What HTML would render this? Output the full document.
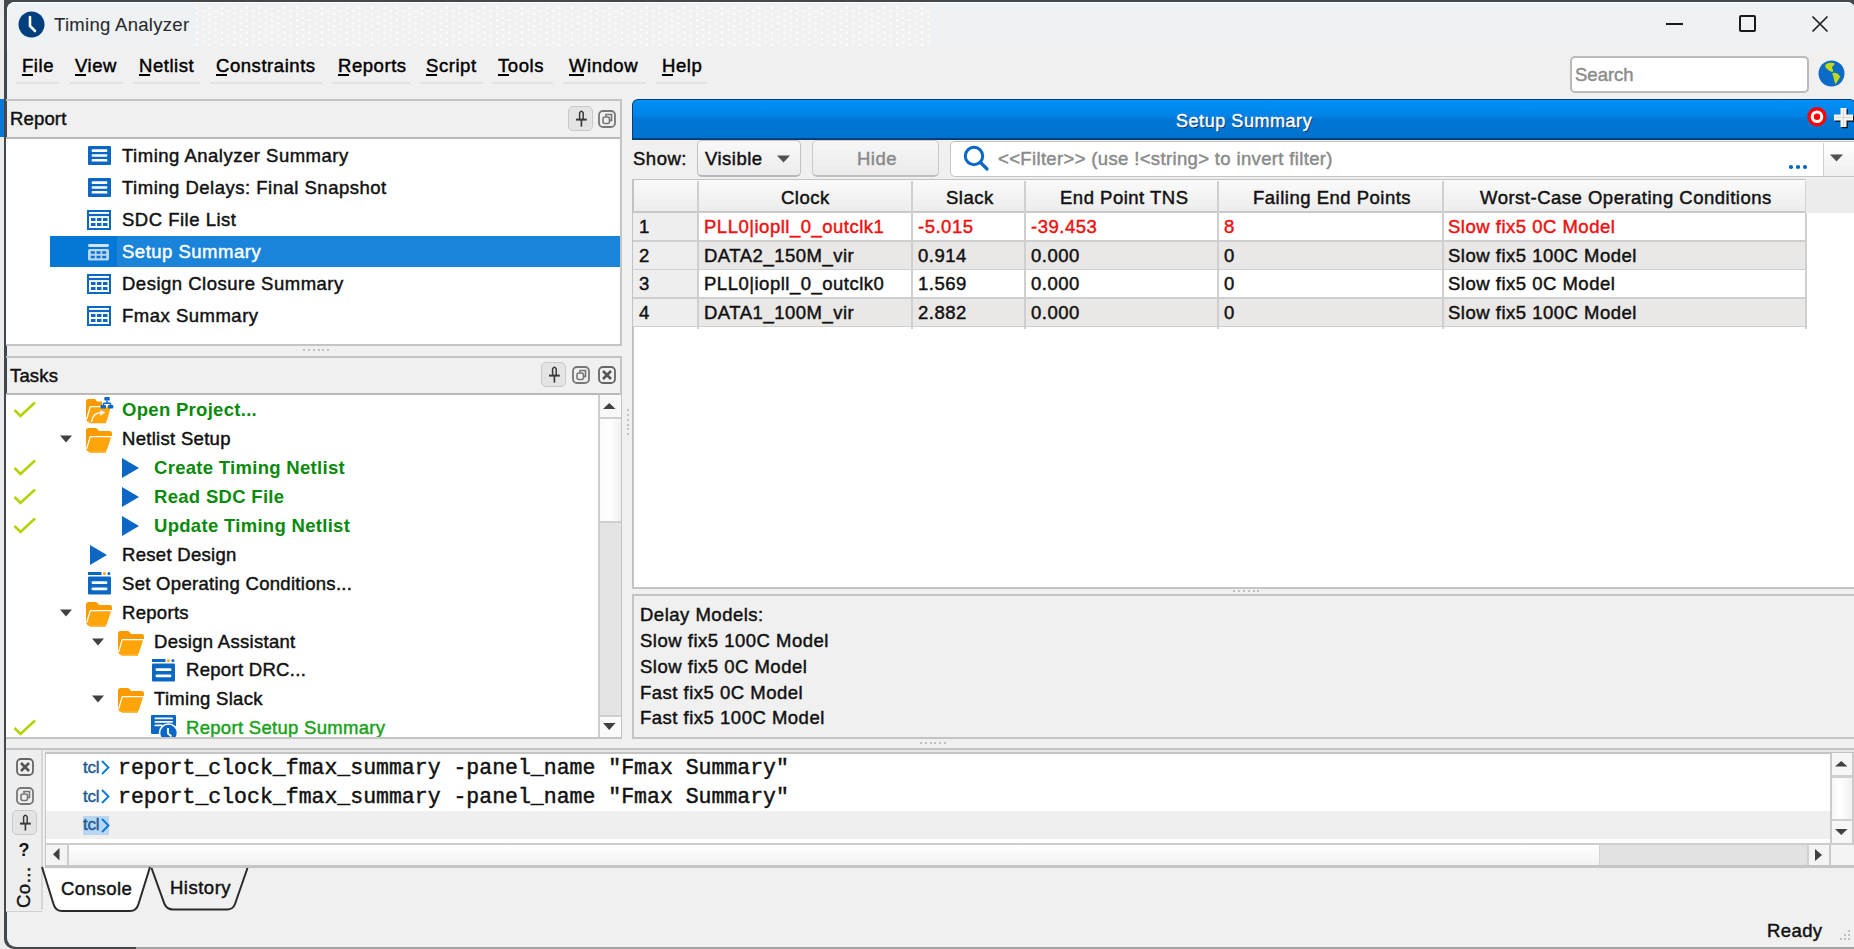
<!DOCTYPE html><html><head><meta charset="utf-8"><style>
html,body{margin:0;padding:0;width:1854px;height:949px;overflow:hidden;background:#f0f0f0;font-family:'Liberation Sans',sans-serif;}
.t{position:absolute;white-space:pre;line-height:1;-webkit-text-stroke:0.45px currentColor;font-family:'Liberation Sans',sans-serif;}
div{box-sizing:border-box}
svg{position:absolute;overflow:visible}
</style></head><body>
<div style="position:absolute;left:0px;top:0px;width:1854px;height:949px;background:#ececec"></div>
<div style="position:absolute;left:0px;top:99px;width:4px;height:38px;background:#0a78d8"></div>
<div style="position:absolute;left:3.5px;top:0px;width:1850.5px;height:949px;background:#43484d;border-radius:0 0 0 10px"></div>
<div style="position:absolute;left:6.5px;top:2px;width:1848px;height:945px;background:#f0f0f0;border-radius:8px 8px 0 9px"></div>
<div style="position:absolute;left:6.5px;top:2px;width:1848px;height:48px;background:#eef2f5;border-radius:8px 8px 0 0;border-top:1.5px solid #fafcfd;border-left:1.5px solid #fafcfd"></div>
<div style="position:absolute;left:196px;top:7px;width:736px;height:39px;background-color:#f1f1f1;background-image:radial-gradient(circle at 1px 1px,#ffffff 0.9px,transparent 1.1px),radial-gradient(circle at 7.25px 4.1px,#ffffff 0.9px,transparent 1.1px);background-size:12.5px 6.2px"></div>
<svg style="left:18px;top:11px" width="27" height="27" viewBox="0 0 27 27"><circle cx="13.5" cy="13.5" r="13" fill="#003f7d"/><path d="M12 6 L12 15 L17 20" stroke="#fff" stroke-width="2.6" fill="none" stroke-linecap="round"/></svg>
<div class="t" style="left:54px;top:16.34px;font-size:18.5px;color:#2a2a2a;letter-spacing:0.3px;font-weight:normal;-webkit-text-stroke:0.1px #2a2a2a;">Timing Analyzer</div>
<div style="position:absolute;left:1666px;top:23px;width:17px;height:2px;background:#1a1a1a"></div>
<div style="position:absolute;left:1739px;top:15px;width:17px;height:17px;border:2px solid #1a1a1a;border-radius:2px"></div>
<svg style="left:1812px;top:16px" width="16" height="16" viewBox="0 0 16 16"><path d="M0.5 0.5 L15.5 15.5 M15.5 0.5 L0.5 15.5" stroke="#1a1a1a" stroke-width="1.6"/></svg>
<div class="t" style="left:22px;top:56.84px;font-size:18.5px;color:#000;letter-spacing:0.55px;font-weight:normal;">File</div>
<div style="position:absolute;left:16px;top:82px;width:43px;height:2px;background:#e2e2e2"></div>
<div class="t" style="left:75px;top:56.84px;font-size:18.5px;color:#000;letter-spacing:0.55px;font-weight:normal;">View</div>
<div style="position:absolute;left:70px;top:82px;width:53px;height:2px;background:#e2e2e2"></div>
<div class="t" style="left:139px;top:56.84px;font-size:18.5px;color:#000;letter-spacing:0.55px;font-weight:normal;">Netlist</div>
<div style="position:absolute;left:133px;top:82px;width:67px;height:2px;background:#e2e2e2"></div>
<div class="t" style="left:216px;top:56.84px;font-size:18.5px;color:#000;letter-spacing:0.55px;font-weight:normal;">Constraints</div>
<div style="position:absolute;left:210px;top:82px;width:112px;height:2px;background:#e2e2e2"></div>
<div class="t" style="left:338px;top:56.84px;font-size:18.5px;color:#000;letter-spacing:0.55px;font-weight:normal;">Reports</div>
<div style="position:absolute;left:332px;top:82px;width:78px;height:2px;background:#e2e2e2"></div>
<div class="t" style="left:426px;top:56.84px;font-size:18.5px;color:#000;letter-spacing:0.55px;font-weight:normal;">Script</div>
<div style="position:absolute;left:420px;top:82px;width:63px;height:2px;background:#e2e2e2"></div>
<div class="t" style="left:498px;top:56.84px;font-size:18.5px;color:#000;letter-spacing:0.55px;font-weight:normal;">Tools</div>
<div style="position:absolute;left:492px;top:82px;width:61px;height:2px;background:#e2e2e2"></div>
<div class="t" style="left:569px;top:56.84px;font-size:18.5px;color:#000;letter-spacing:0.55px;font-weight:normal;">Window</div>
<div style="position:absolute;left:563px;top:82px;width:83px;height:2px;background:#e2e2e2"></div>
<div class="t" style="left:662px;top:56.84px;font-size:18.5px;color:#000;letter-spacing:0.55px;font-weight:normal;">Help</div>
<div style="position:absolute;left:656px;top:82px;width:51px;height:2px;background:#e2e2e2"></div>
<div style="position:absolute;left:22px;top:74px;width:11px;height:2px;background:#000"></div>
<div style="position:absolute;left:75px;top:74px;width:11px;height:2px;background:#000"></div>
<div style="position:absolute;left:139px;top:74px;width:11px;height:2px;background:#000"></div>
<div style="position:absolute;left:216px;top:74px;width:11px;height:2px;background:#000"></div>
<div style="position:absolute;left:338px;top:74px;width:11px;height:2px;background:#000"></div>
<div style="position:absolute;left:426px;top:74px;width:11px;height:2px;background:#000"></div>
<div style="position:absolute;left:498px;top:74px;width:11px;height:2px;background:#000"></div>
<div style="position:absolute;left:569px;top:74px;width:15px;height:2px;background:#000"></div>
<div style="position:absolute;left:662px;top:74px;width:11px;height:2px;background:#000"></div>
<div style="position:absolute;left:1570px;top:56px;width:239px;height:37px;background:#fff;border:2px solid #bababa;border-radius:5px"></div>
<div class="t" style="left:1575px;top:66.34px;font-size:18.5px;color:#8c8c8c;letter-spacing:0px;font-weight:normal;">Search</div>
<svg style="left:1818px;top:60px" width="27" height="27" viewBox="0 0 27 27"><circle cx="13.5" cy="13.5" r="13" fill="#0a6cc6"/><path d="M7.5 4.5 C10 2.5 14.5 2.3 17 3.8 C16 5.5 14 6 14 8 C14.5 9.5 16 10.5 14.5 12 C12 11.5 10 10 8.5 8.5 C7.5 7.5 6.8 6 7.5 4.5 Z" fill="#c2d81a"/><path d="M14.5 13 C17.5 12.3 21 13.8 22 16.5 C21.5 19 19.5 20.5 17.5 24.5 C16.5 22 15.8 19.5 15.5 17 C15 15.5 14 14.5 14.5 13 Z" fill="#c2d81a"/></svg>
<div style="position:absolute;left:6px;top:99px;width:616px;height:2px;background:#c4c4c4"></div>
<div class="t" style="left:10px;top:109.84px;font-size:18.5px;color:#111;letter-spacing:0.15px;font-weight:normal;">Report</div>
<div style="position:absolute;left:568px;top:106px;width:25px;height:25px;background:#e4e4e4;border:1.5px solid #c9c9c9;border-radius:5px"></div>
<svg style="left:568px;top:106px" width="25" height="25" viewBox="0 0 25 25"><path d="M11.6 13 L11.6 6.8 Q13.4 3.6 15.2 6.8 L15.2 13" stroke="#3a3a3a" stroke-width="1.5" fill="none"/><path d="M8 13.6 H18.8" stroke="#3a3a3a" stroke-width="2"/><path d="M13.4 13.6 V20.6" stroke="#3a3a3a" stroke-width="1.7"/></svg>
<svg style="left:598px;top:110px" width="18" height="18" viewBox="0 0 18 18"><rect x="1" y="1" width="16" height="16" rx="4" fill="none" stroke="#777" stroke-width="1.8"/><rect x="5" y="7" width="6.5" height="6.5" rx="2" fill="none" stroke="#777" stroke-width="1.6"/><path d="M8 6.5 L8 4.5 L13.5 4.5 L13.5 10.5 L12 10.5" fill="none" stroke="#777" stroke-width="1.6"/></svg>
<div style="position:absolute;left:620px;top:99px;width:2px;height:247px;background:#c4c4c4"></div>
<div style="position:absolute;left:6px;top:138px;width:614px;height:207px;background:#fff"></div>
<div style="position:absolute;left:6px;top:137px;width:614px;height:2px;background:#b9b9b9"></div>
<div style="position:absolute;left:6px;top:344px;width:616px;height:2px;background:#c4c4c4"></div>
<div style="position:absolute;left:50px;top:236px;width:570px;height:31px;background:#1a83da"></div>
<div style="position:absolute;left:50px;top:236px;width:67px;height:31px;background:#0578d6"></div>
<svg style="left:88px;top:146px" width="23" height="19" viewBox="0 0 23 19"><rect x="0" y="0" width="23" height="19" rx="1" fill="#0a68c4"/><rect x="3.6" y="3.3" width="15.8" height="2.6" rx="1.2" fill="#fff"/><rect x="3.6" y="8.2" width="15.8" height="2.6" rx="1.2" fill="#fff"/><rect x="3.6" y="13" width="15.8" height="2.6" rx="1.2" fill="#fff"/></svg>
<svg style="left:88px;top:178px" width="23" height="19" viewBox="0 0 23 19"><rect x="0" y="0" width="23" height="19" rx="1" fill="#0a68c4"/><rect x="3.6" y="3.3" width="15.8" height="2.6" rx="1.2" fill="#fff"/><rect x="3.6" y="8.2" width="15.8" height="2.6" rx="1.2" fill="#fff"/><rect x="3.6" y="13" width="15.8" height="2.6" rx="1.2" fill="#fff"/></svg>
<svg style="left:87px;top:210px" width="24" height="20" viewBox="0 0 24 20"><rect x="1" y="1" width="22" height="18" fill="#fff" stroke="#0a68c4" stroke-width="2"/><path d="M1 5 H23" stroke="#0a68c4" stroke-width="2.2"/><path d="M4 9.5 h4.5 M10 9.5 h4.5 M16 9.5 h4.5 M4 14.5 h4.5 M10 14.5 h4.5 M16 14.5 h4.5" stroke="#0a68c4" stroke-width="3"/></svg>
<svg style="left:87px;top:243px" width="24" height="18" viewBox="0 0 24 18"><rect x="1" y="1" width="21" height="3" rx="1.4" fill="#cfe3f6"/><rect x="1" y="6" width="21" height="11.5" rx="1.6" fill="#b9d6f2"/><path d="M3.8 9.5 h4 M9.5 9.5 h4 M15.2 9.5 h4 M3.8 14 h4 M9.5 14 h4 M15.2 14 h4" stroke="#0a6fd0" stroke-width="2.6"/></svg>
<svg style="left:87px;top:274px" width="24" height="20" viewBox="0 0 24 20"><rect x="1" y="1" width="22" height="18" fill="#fff" stroke="#0a68c4" stroke-width="2"/><path d="M1 5 H23" stroke="#0a68c4" stroke-width="2.2"/><path d="M4 9.5 h4.5 M10 9.5 h4.5 M16 9.5 h4.5 M4 14.5 h4.5 M10 14.5 h4.5 M16 14.5 h4.5" stroke="#0a68c4" stroke-width="3"/></svg>
<svg style="left:87px;top:306px" width="24" height="20" viewBox="0 0 24 20"><rect x="1" y="1" width="22" height="18" fill="#fff" stroke="#0a68c4" stroke-width="2"/><path d="M1 5 H23" stroke="#0a68c4" stroke-width="2.2"/><path d="M4 9.5 h4.5 M10 9.5 h4.5 M16 9.5 h4.5 M4 14.5 h4.5 M10 14.5 h4.5 M16 14.5 h4.5" stroke="#0a68c4" stroke-width="3"/></svg>
<div class="t" style="left:122px;top:147.34px;font-size:18.5px;color:#111;letter-spacing:0.5px;font-weight:normal;">Timing Analyzer Summary</div>
<div class="t" style="left:122px;top:179.34px;font-size:18.5px;color:#111;letter-spacing:0.5px;font-weight:normal;">Timing Delays: Final Snapshot</div>
<div class="t" style="left:122px;top:211.34px;font-size:18.5px;color:#111;letter-spacing:0.5px;font-weight:normal;">SDC File List</div>
<div class="t" style="left:122px;top:243.34px;font-size:18.5px;color:#fff;letter-spacing:0.5px;font-weight:normal;">Setup Summary</div>
<div class="t" style="left:122px;top:275.34px;font-size:18.5px;color:#111;letter-spacing:0.5px;font-weight:normal;">Design Closure Summary</div>
<div class="t" style="left:122px;top:307.34px;font-size:18.5px;color:#111;letter-spacing:0.5px;font-weight:normal;">Fmax Summary</div>
<div style="position:absolute;left:303px;top:349px;width:2px;height:2px;background:#c0c0c0"></div>
<div style="position:absolute;left:308px;top:349px;width:2px;height:2px;background:#c0c0c0"></div>
<div style="position:absolute;left:313px;top:349px;width:2px;height:2px;background:#c0c0c0"></div>
<div style="position:absolute;left:318px;top:349px;width:2px;height:2px;background:#c0c0c0"></div>
<div style="position:absolute;left:322px;top:349px;width:2px;height:2px;background:#c0c0c0"></div>
<div style="position:absolute;left:327px;top:349px;width:2px;height:2px;background:#c0c0c0"></div>
<div style="position:absolute;left:6px;top:356px;width:616px;height:2px;background:#c4c4c4"></div>
<div class="t" style="left:10px;top:366.84px;font-size:18.5px;color:#111;letter-spacing:0.15px;font-weight:normal;">Tasks</div>
<div style="position:absolute;left:541px;top:362px;width:25px;height:25px;background:#e4e4e4;border:1.5px solid #c9c9c9;border-radius:5px"></div>
<svg style="left:541px;top:362px" width="25" height="25" viewBox="0 0 25 25"><path d="M11.6 13 L11.6 6.8 Q13.4 3.6 15.2 6.8 L15.2 13" stroke="#3a3a3a" stroke-width="1.5" fill="none"/><path d="M8 13.6 H18.8" stroke="#3a3a3a" stroke-width="2"/><path d="M13.4 13.6 V20.6" stroke="#3a3a3a" stroke-width="1.7"/></svg>
<svg style="left:572px;top:366px" width="18" height="18" viewBox="0 0 18 18"><rect x="1" y="1" width="16" height="16" rx="4" fill="none" stroke="#777" stroke-width="1.8"/><rect x="5" y="7" width="6.5" height="6.5" rx="2" fill="none" stroke="#777" stroke-width="1.6"/><path d="M8 6.5 L8 4.5 L13.5 4.5 L13.5 10.5 L12 10.5" fill="none" stroke="#777" stroke-width="1.6"/></svg>
<svg style="left:598px;top:366px" width="18" height="18" viewBox="0 0 18 18"><rect x="1" y="1" width="16" height="16" rx="4" fill="none" stroke="#666" stroke-width="1.8"/><path d="M5 5 L13 13 M13 5 L5 13" stroke="#555" stroke-width="2.6"/></svg>
<div style="position:absolute;left:6px;top:393px;width:616px;height:2px;background:#b9b9b9"></div>
<div style="position:absolute;left:620px;top:356px;width:2px;height:383px;background:#c4c4c4"></div>
<div style="position:absolute;left:6px;top:395px;width:614px;height:343px;background:#fff"></div>
<div style="position:absolute;left:6px;top:737px;width:616px;height:2px;background:#c4c4c4"></div>
<div style="position:absolute;left:598px;top:395px;width:23px;height:343px;background:#e4e4e4;border-left:2px solid #cdcdcd"></div>
<div style="position:absolute;left:600px;top:395px;width:21px;height:24px;background:#f8f8f8;border-bottom:2px solid #cfcfcf"></div>
<div style="position:absolute;left:600px;top:419px;width:21px;height:104px;background:linear-gradient(90deg,#fafafa,#ffffff,#f0f0f0);border-bottom:2px solid #cfcfcf"></div>
<div style="position:absolute;left:600px;top:715px;width:21px;height:23px;background:#fafafa;border-top:2px solid #cfcfcf"></div>
<svg style="left:603px;top:402.5px" width="12.5" height="6" viewBox="0 0 12.5 6"><path d="M0 6 L6.25 0 L12.5 6Z" fill="#404040"/></svg>
<svg style="left:603px;top:723px" width="12.5" height="7" viewBox="0 0 12.5 7"><path d="M0 0 L6.25 7 L12.5 0Z" fill="#404040"/></svg>
<svg style="left:13px;top:401px" width="24" height="17" viewBox="0 0 24 17"><path d="M1.5 9 L7.5 15 L22 1.5" stroke="#b5d200" stroke-width="2.6" fill="none"/></svg>
<svg style="left:86px;top:397px" width="28" height="26" viewBox="0 0 28 26"><path d="M0 4.5 Q0 2 2.5 2 L9 2 L11 4.5 L16 4.5 L16 10 L4 10 L0 23 Z" fill="#f99b00"/><path d="M4.2 9.6 L25.5 9.6 L21.6 23.5 Q21 25.5 19 25.5 L2.5 25.5 Q0 25.5 0.5 23 Z" fill="#ffa50a" stroke="#fff" stroke-width="1.2" stroke-linejoin="round"/><path d="M0.6 22.5 L4.3 25.5 L20 25.5" stroke="#ffa50a" stroke-width="1.6" fill="none"/><path d="M5.5 25 Q7 15 16 15.5" stroke="#f4f4f0" stroke-width="1.4" fill="none"/><path d="M14.5 13 L19.5 15.5 L14 19Z" fill="#eef4fa"/><rect x="18.3" y="0" width="5.5" height="3.6" rx="1" fill="#0a68c4"/><path d="M21 3.5 V6 M17.5 6.2 H24.5 M17.5 6 V8 M24.5 6 V8" stroke="#0a68c4" stroke-width="1.4" fill="none"/><rect x="14.5" y="8" width="5.5" height="3.6" rx="1" fill="#0a68c4"/><rect x="21.8" y="8" width="5.5" height="3.6" rx="1" fill="#0a68c4"/></svg>
<div class="t" style="left:122px;top:401.34px;font-size:18.5px;color:#0a8a0a;letter-spacing:0.3px;font-weight:bold;-webkit-text-stroke:0;">Open Project...</div>
<svg style="left:60px;top:435px" width="12" height="8" viewBox="0 0 12 8"><path d="M0 0.5 L12 0.5 L6 7.5Z" fill="#404040"/></svg>
<svg style="left:86px;top:428px" width="26" height="24" viewBox="0 0 26 24"><path d="M0 2.5 Q0 0 2.5 0 L9.5 0 Q11 0 12 1.5 L13 3 L23.5 3 Q26 3 26 5.5 L26 9 L4 9 L0 22 Z" fill="#f99b00"/><path d="M4.2 8.6 L25.8 8.6 L21.6 22 Q21 24 19 24 L2.5 24 Q0 24 0.5 21.5 Z" fill="#ffa50a" stroke="#fff" stroke-width="1.2" stroke-linejoin="round"/><path d="M0.6 21 L4.3 24 L20 24" stroke="#ffa50a" stroke-width="1.6" fill="none"/></svg>
<div class="t" style="left:122px;top:430.34px;font-size:18.5px;color:#111;letter-spacing:0.3px;font-weight:normal;">Netlist Setup</div>
<svg style="left:13px;top:459px" width="24" height="17" viewBox="0 0 24 17"><path d="M1.5 9 L7.5 15 L22 1.5" stroke="#b5d200" stroke-width="2.6" fill="none"/></svg>
<svg style="left:122px;top:458px" width="17" height="20" viewBox="0 0 17 20"><path d="M0 0 L17 10 L0 20Z" fill="#0a68c4"/></svg>
<div class="t" style="left:154px;top:459.34px;font-size:18.5px;color:#0a8a0a;letter-spacing:0.3px;font-weight:bold;-webkit-text-stroke:0;">Create Timing Netlist</div>
<svg style="left:13px;top:488px" width="24" height="17" viewBox="0 0 24 17"><path d="M1.5 9 L7.5 15 L22 1.5" stroke="#b5d200" stroke-width="2.6" fill="none"/></svg>
<svg style="left:122px;top:487px" width="17" height="20" viewBox="0 0 17 20"><path d="M0 0 L17 10 L0 20Z" fill="#0a68c4"/></svg>
<div class="t" style="left:154px;top:488.34px;font-size:18.5px;color:#0a8a0a;letter-spacing:0.3px;font-weight:bold;-webkit-text-stroke:0;">Read SDC File</div>
<svg style="left:13px;top:517px" width="24" height="17" viewBox="0 0 24 17"><path d="M1.5 9 L7.5 15 L22 1.5" stroke="#b5d200" stroke-width="2.6" fill="none"/></svg>
<svg style="left:122px;top:516px" width="17" height="20" viewBox="0 0 17 20"><path d="M0 0 L17 10 L0 20Z" fill="#0a68c4"/></svg>
<div class="t" style="left:154px;top:517.34px;font-size:18.5px;color:#0a8a0a;letter-spacing:0.3px;font-weight:bold;-webkit-text-stroke:0;">Update Timing Netlist</div>
<svg style="left:90px;top:545px" width="17" height="20" viewBox="0 0 17 20"><path d="M0 0 L17 10 L0 20Z" fill="#0a68c4"/></svg>
<div class="t" style="left:122px;top:546.34px;font-size:18.5px;color:#111;letter-spacing:0.3px;font-weight:normal;">Reset Design</div>
<svg style="left:88px;top:572px" width="23" height="23" viewBox="0 0 23 23"><rect x="0" y="0" width="13.5" height="3" fill="#0a68c4"/><rect x="15" y="0.2" width="2.8" height="2.8" rx="1" fill="#ffa50a"/><rect x="19.5" y="0.2" width="2.8" height="2.8" rx="1" fill="#0a68c4"/><rect x="0" y="4.5" width="23" height="18" rx="1" fill="#0a68c4"/><rect x="3.6" y="9.3" width="15.8" height="2.6" rx="1.2" fill="#fff"/><rect x="3.6" y="15.6" width="15.8" height="2.6" rx="1.2" fill="#fff"/></svg>
<div class="t" style="left:122px;top:575.34px;font-size:18.5px;color:#111;letter-spacing:0.3px;font-weight:normal;">Set Operating Conditions...</div>
<svg style="left:60px;top:609px" width="12" height="8" viewBox="0 0 12 8"><path d="M0 0.5 L12 0.5 L6 7.5Z" fill="#404040"/></svg>
<svg style="left:86px;top:602px" width="26" height="24" viewBox="0 0 26 24"><path d="M0 2.5 Q0 0 2.5 0 L9.5 0 Q11 0 12 1.5 L13 3 L23.5 3 Q26 3 26 5.5 L26 9 L4 9 L0 22 Z" fill="#f99b00"/><path d="M4.2 8.6 L25.8 8.6 L21.6 22 Q21 24 19 24 L2.5 24 Q0 24 0.5 21.5 Z" fill="#ffa50a" stroke="#fff" stroke-width="1.2" stroke-linejoin="round"/><path d="M0.6 21 L4.3 24 L20 24" stroke="#ffa50a" stroke-width="1.6" fill="none"/></svg>
<div class="t" style="left:122px;top:604.34px;font-size:18.5px;color:#111;letter-spacing:0.3px;font-weight:normal;">Reports</div>
<svg style="left:92px;top:638px" width="12" height="8" viewBox="0 0 12 8"><path d="M0 0.5 L12 0.5 L6 7.5Z" fill="#404040"/></svg>
<svg style="left:118px;top:631px" width="26" height="24" viewBox="0 0 26 24"><path d="M0 2.5 Q0 0 2.5 0 L9.5 0 Q11 0 12 1.5 L13 3 L23.5 3 Q26 3 26 5.5 L26 9 L4 9 L0 22 Z" fill="#f99b00"/><path d="M4.2 8.6 L25.8 8.6 L21.6 22 Q21 24 19 24 L2.5 24 Q0 24 0.5 21.5 Z" fill="#ffa50a" stroke="#fff" stroke-width="1.2" stroke-linejoin="round"/><path d="M0.6 21 L4.3 24 L20 24" stroke="#ffa50a" stroke-width="1.6" fill="none"/></svg>
<div class="t" style="left:154px;top:633.34px;font-size:18.5px;color:#111;letter-spacing:0.3px;font-weight:normal;">Design Assistant</div>
<svg style="left:152px;top:659px" width="23" height="23" viewBox="0 0 23 23"><rect x="0" y="0" width="13.5" height="3" fill="#0a68c4"/><rect x="15" y="0.2" width="2.8" height="2.8" rx="1" fill="#ffa50a"/><rect x="19.5" y="0.2" width="2.8" height="2.8" rx="1" fill="#0a68c4"/><rect x="0" y="4.5" width="23" height="18" rx="1" fill="#0a68c4"/><rect x="3.6" y="9.3" width="15.8" height="2.6" rx="1.2" fill="#fff"/><rect x="3.6" y="15.6" width="15.8" height="2.6" rx="1.2" fill="#fff"/></svg>
<div class="t" style="left:186px;top:661.34px;font-size:18.5px;color:#111;letter-spacing:0.3px;font-weight:normal;">Report DRC...</div>
<svg style="left:92px;top:695px" width="12" height="8" viewBox="0 0 12 8"><path d="M0 0.5 L12 0.5 L6 7.5Z" fill="#404040"/></svg>
<svg style="left:118px;top:688px" width="26" height="24" viewBox="0 0 26 24"><path d="M0 2.5 Q0 0 2.5 0 L9.5 0 Q11 0 12 1.5 L13 3 L23.5 3 Q26 3 26 5.5 L26 9 L4 9 L0 22 Z" fill="#f99b00"/><path d="M4.2 8.6 L25.8 8.6 L21.6 22 Q21 24 19 24 L2.5 24 Q0 24 0.5 21.5 Z" fill="#ffa50a" stroke="#fff" stroke-width="1.2" stroke-linejoin="round"/><path d="M0.6 21 L4.3 24 L20 24" stroke="#ffa50a" stroke-width="1.6" fill="none"/></svg>
<div class="t" style="left:154px;top:690.34px;font-size:18.5px;color:#111;letter-spacing:0.3px;font-weight:normal;">Timing Slack</div>
<svg style="left:13px;top:719px" width="24" height="17" viewBox="0 0 24 17"><path d="M1.5 9 L7.5 15 L22 1.5" stroke="#b5d200" stroke-width="2.6" fill="none"/></svg>
<svg style="left:151px;top:715px" width="27" height="26" viewBox="0 0 27 26"><rect x="0" y="0" width="25" height="19" rx="1" fill="#0a68c4"/><rect x="3.5" y="2.5" width="18.5" height="1.8" rx="0.9" fill="#fff"/><rect x="3.5" y="6" width="18.5" height="1.8" rx="0.9" fill="#fff"/><rect x="3.5" y="9.5" width="8" height="1.8" rx="0.9" fill="#fff"/><circle cx="17.5" cy="18" r="9" fill="#0a68c4" stroke="#fff" stroke-width="1.6"/><path d="M17 13 V18.5 L20.5 21.5" stroke="#fff" stroke-width="1.8" fill="none"/></svg>
<div class="t" style="left:186px;top:719.34px;font-size:18.5px;color:#17a317;letter-spacing:0.3px;font-weight:normal;">Report Setup Summary</div>
<div style="position:absolute;left:6px;top:739px;width:616px;height:9px;background:#f0f0f0"></div>
<div style="position:absolute;left:6px;top:737px;width:616px;height:2px;background:#c4c4c4"></div>
<div style="position:absolute;left:627px;top:409px;width:2px;height:2px;background:#c0c0c0"></div>
<div style="position:absolute;left:627px;top:414px;width:2px;height:2px;background:#c0c0c0"></div>
<div style="position:absolute;left:627px;top:419px;width:2px;height:2px;background:#c0c0c0"></div>
<div style="position:absolute;left:627px;top:424px;width:2px;height:2px;background:#c0c0c0"></div>
<div style="position:absolute;left:627px;top:428px;width:2px;height:2px;background:#c0c0c0"></div>
<div style="position:absolute;left:627px;top:433px;width:2px;height:2px;background:#c0c0c0"></div>
<div style="position:absolute;left:632px;top:99px;width:1224px;height:41px;background:linear-gradient(#0090f6 0%,#0082e6 42%,#0076d4 52%,#0072cf 100%);border:1.5px solid #003f78;border-bottom-width:2px;border-radius:6px 6px 0 0"></div>
<div class="t" style="left:1176px;top:111.76px;font-size:18px;color:#fff;letter-spacing:0.55px;font-weight:normal;text-shadow:1px 1px 0.5px #002850;">Setup Summary</div>
<svg style="left:1807px;top:107px" width="20" height="20" viewBox="0 0 20 20"><circle cx="10" cy="9.7" r="8" fill="#fff" stroke="#f00" stroke-width="3.4"/><circle cx="10" cy="9.7" r="3.2" fill="#f00"/></svg>
<svg style="left:1832px;top:106px" width="24" height="24" viewBox="0 0 24 24"><path d="M8.5 2 H14.5 V8.5 H21 V14.5 H14.5 V21 H8.5 V14.5 H2 V8.5 H8.5 Z" fill="#111" transform="translate(1.3,1.3)"/><path d="M8.5 2 H14.5 V8.5 H21 V14.5 H14.5 V21 H8.5 V14.5 H2 V8.5 H8.5 Z" fill="#f4f4f4"/><path d="M11.5 3 V20 M3 11.5 H20" stroke="#d8d8d8" stroke-width="1"/></svg>
<div class="t" style="left:633px;top:150.34px;font-size:18.5px;color:#111;letter-spacing:0.5px;font-weight:normal;">Show:</div>
<div style="position:absolute;left:697px;top:140px;width:104px;height:37px;background:linear-gradient(#f9f9f9,#ececec);border:1.5px solid #c2c2c2;border-bottom:2px solid #b8b8b8;border-radius:5px"></div>
<div class="t" style="left:705px;top:149.84px;font-size:18.5px;color:#111;letter-spacing:0.5px;font-weight:normal;">Visible</div>
<svg style="left:777px;top:155px" width="13" height="8" viewBox="0 0 13 8"><path d="M0 0.5 L13 0.5 L6.5 7.5Z" fill="#505050"/></svg>
<div style="position:absolute;left:812px;top:140px;width:127px;height:37px;background:linear-gradient(#f6f6f6,#ebebeb);border:1.5px solid #cacaca;border-bottom:2px solid #c0c0c0;border-radius:5px"></div>
<div class="t" style="left:857px;top:149.84px;font-size:18.5px;color:#8a8a8a;letter-spacing:0.5px;font-weight:normal;">Hide</div>
<div style="position:absolute;left:950px;top:141px;width:910px;height:36px;background:#fff;border:1.5px solid #c4c4c4;border-radius:5px"></div>
<svg style="left:962px;top:145px" width="30" height="30" viewBox="0 0 30 30"><circle cx="12" cy="11" r="8.7" fill="none" stroke="#0a68c4" stroke-width="3"/><path d="M18.5 17.5 L25 24" stroke="#0a68c4" stroke-width="3.2" stroke-linecap="round"/></svg>
<div class="t" style="left:998px;top:149.84px;font-size:18.5px;color:#8a8a8a;letter-spacing:0.35px;font-weight:normal;">&lt;&lt;Filter&gt;&gt; (use !&lt;string&gt; to invert filter)</div>
<div style="position:absolute;left:1789px;top:165px;width:3.5px;height:3.5px;background:#0a68c4;border-radius:50%"></div>
<div style="position:absolute;left:1796px;top:165px;width:3.5px;height:3.5px;background:#0a68c4;border-radius:50%"></div>
<div style="position:absolute;left:1803px;top:165px;width:3.5px;height:3.5px;background:#0a68c4;border-radius:50%"></div>
<div style="position:absolute;left:1823px;top:142.5px;width:31px;height:33px;background:linear-gradient(#ffffff,#eeeeee);border-left:1.5px solid #d0d0d0"></div>
<svg style="left:1830px;top:154px" width="13" height="8" viewBox="0 0 13 8"><path d="M0 0.5 L13 0.5 L6.5 7.5Z" fill="#505050"/></svg>
<div style="position:absolute;left:632px;top:179px;width:1222px;height:410px;background:#fff;border:1px solid #c2c2c2;border-left:2px solid #c2c2c2;border-right:none"></div>
<div style="position:absolute;left:634px;top:180px;width:1220px;height:32px;background:linear-gradient(#fafafa,#ececec)"></div>
<div style="position:absolute;left:633px;top:211px;width:1173px;height:2px;background:#c8c8c8"></div>
<div style="position:absolute;left:697px;top:181px;width:2px;height:148px;background:#d0d0d0"></div>
<div style="position:absolute;left:911px;top:181px;width:2px;height:148px;background:#d0d0d0"></div>
<div style="position:absolute;left:1024px;top:181px;width:2px;height:148px;background:#d0d0d0"></div>
<div style="position:absolute;left:1217px;top:181px;width:2px;height:148px;background:#d0d0d0"></div>
<div style="position:absolute;left:1442px;top:181px;width:2px;height:148px;background:#d0d0d0"></div>
<div style="position:absolute;left:1805px;top:181px;width:2px;height:148px;background:#d0d0d0"></div>
<div class="t" style="left:781px;top:189.34px;font-size:18.5px;color:#111;letter-spacing:0.5px;font-weight:normal;">Clock</div>
<div class="t" style="left:946px;top:189.34px;font-size:18.5px;color:#111;letter-spacing:0.5px;font-weight:normal;">Slack</div>
<div class="t" style="left:1060px;top:189.34px;font-size:18.5px;color:#111;letter-spacing:0.5px;font-weight:normal;">End Point TNS</div>
<div class="t" style="left:1253px;top:189.34px;font-size:18.5px;color:#111;letter-spacing:0.5px;font-weight:normal;">Failing End Points</div>
<div class="t" style="left:1480px;top:189.34px;font-size:18.5px;color:#111;letter-spacing:0.5px;font-weight:normal;">Worst-Case Operating Conditions</div>
<div style="position:absolute;left:633px;top:213.0px;width:1173px;height:28.5px;background:#ffffff"></div>
<div style="position:absolute;left:633px;top:213.0px;width:65px;height:28.5px;background:#eeeeee"></div>
<div style="position:absolute;left:633px;top:240.0px;width:1173px;height:1.5px;background:#cfcfcf"></div>
<div class="t" style="left:639px;top:218.34px;font-size:18.5px;color:#111;letter-spacing:0.5px;font-weight:normal;">1</div>
<div class="t" style="left:704px;top:218.34px;font-size:18.5px;color:#f01010;letter-spacing:0.5px;font-weight:normal;">PLL0|iopll_0_outclk1</div>
<div class="t" style="left:918px;top:218.34px;font-size:18.5px;color:#f01010;letter-spacing:0.5px;font-weight:normal;">-5.015</div>
<div class="t" style="left:1031px;top:218.34px;font-size:18.5px;color:#f01010;letter-spacing:0.5px;font-weight:normal;">-39.453</div>
<div class="t" style="left:1224px;top:218.34px;font-size:18.5px;color:#f01010;letter-spacing:0.5px;font-weight:normal;">8</div>
<div class="t" style="left:1448px;top:218.34px;font-size:18.5px;color:#f01010;letter-spacing:0.5px;font-weight:normal;">Slow fix5 0C Model</div>
<div style="position:absolute;left:633px;top:241.5px;width:1173px;height:28.5px;background:#e9e8e6"></div>
<div style="position:absolute;left:633px;top:241.5px;width:65px;height:28.5px;background:#eeeeee"></div>
<div style="position:absolute;left:633px;top:268.5px;width:1173px;height:1.5px;background:#cfcfcf"></div>
<div class="t" style="left:639px;top:246.84px;font-size:18.5px;color:#111;letter-spacing:0.5px;font-weight:normal;">2</div>
<div class="t" style="left:704px;top:246.84px;font-size:18.5px;color:#111;letter-spacing:0.5px;font-weight:normal;">DATA2_150M_vir</div>
<div class="t" style="left:918px;top:246.84px;font-size:18.5px;color:#111;letter-spacing:0.5px;font-weight:normal;">0.914</div>
<div class="t" style="left:1031px;top:246.84px;font-size:18.5px;color:#111;letter-spacing:0.5px;font-weight:normal;">0.000</div>
<div class="t" style="left:1224px;top:246.84px;font-size:18.5px;color:#111;letter-spacing:0.5px;font-weight:normal;">0</div>
<div class="t" style="left:1448px;top:246.84px;font-size:18.5px;color:#111;letter-spacing:0.5px;font-weight:normal;">Slow fix5 100C Model</div>
<div style="position:absolute;left:633px;top:270.0px;width:1173px;height:28.5px;background:#ffffff"></div>
<div style="position:absolute;left:633px;top:270.0px;width:65px;height:28.5px;background:#eeeeee"></div>
<div style="position:absolute;left:633px;top:297.0px;width:1173px;height:1.5px;background:#cfcfcf"></div>
<div class="t" style="left:639px;top:275.34px;font-size:18.5px;color:#111;letter-spacing:0.5px;font-weight:normal;">3</div>
<div class="t" style="left:704px;top:275.34px;font-size:18.5px;color:#111;letter-spacing:0.5px;font-weight:normal;">PLL0|iopll_0_outclk0</div>
<div class="t" style="left:918px;top:275.34px;font-size:18.5px;color:#111;letter-spacing:0.5px;font-weight:normal;">1.569</div>
<div class="t" style="left:1031px;top:275.34px;font-size:18.5px;color:#111;letter-spacing:0.5px;font-weight:normal;">0.000</div>
<div class="t" style="left:1224px;top:275.34px;font-size:18.5px;color:#111;letter-spacing:0.5px;font-weight:normal;">0</div>
<div class="t" style="left:1448px;top:275.34px;font-size:18.5px;color:#111;letter-spacing:0.5px;font-weight:normal;">Slow fix5 0C Model</div>
<div style="position:absolute;left:633px;top:298.5px;width:1173px;height:28.5px;background:#e9e8e6"></div>
<div style="position:absolute;left:633px;top:298.5px;width:65px;height:28.5px;background:#eeeeee"></div>
<div style="position:absolute;left:633px;top:325.5px;width:1173px;height:1.5px;background:#cfcfcf"></div>
<div class="t" style="left:639px;top:303.84px;font-size:18.5px;color:#111;letter-spacing:0.5px;font-weight:normal;">4</div>
<div class="t" style="left:704px;top:303.84px;font-size:18.5px;color:#111;letter-spacing:0.5px;font-weight:normal;">DATA1_100M_vir</div>
<div class="t" style="left:918px;top:303.84px;font-size:18.5px;color:#111;letter-spacing:0.5px;font-weight:normal;">2.882</div>
<div class="t" style="left:1031px;top:303.84px;font-size:18.5px;color:#111;letter-spacing:0.5px;font-weight:normal;">0.000</div>
<div class="t" style="left:1224px;top:303.84px;font-size:18.5px;color:#111;letter-spacing:0.5px;font-weight:normal;">0</div>
<div class="t" style="left:1448px;top:303.84px;font-size:18.5px;color:#111;letter-spacing:0.5px;font-weight:normal;">Slow fix5 100C Model</div>
<div style="position:absolute;left:697px;top:213px;width:1.5px;height:114px;background:#cfcfcf"></div>
<div style="position:absolute;left:911px;top:213px;width:1.5px;height:114px;background:#cfcfcf"></div>
<div style="position:absolute;left:1024px;top:213px;width:1.5px;height:114px;background:#cfcfcf"></div>
<div style="position:absolute;left:1217px;top:213px;width:1.5px;height:114px;background:#cfcfcf"></div>
<div style="position:absolute;left:1442px;top:213px;width:1.5px;height:114px;background:#cfcfcf"></div>
<div style="position:absolute;left:1805px;top:213px;width:1.5px;height:114px;background:#cfcfcf"></div>
<div style="position:absolute;left:1806px;top:179px;width:48px;height:34px;background:#ececec"></div>
<div style="position:absolute;left:632px;top:587px;width:1222px;height:2px;background:#c4c4c4"></div>
<div style="position:absolute;left:1233px;top:590px;width:2px;height:2px;background:#c0c0c0"></div>
<div style="position:absolute;left:1238px;top:590px;width:2px;height:2px;background:#c0c0c0"></div>
<div style="position:absolute;left:1243px;top:590px;width:2px;height:2px;background:#c0c0c0"></div>
<div style="position:absolute;left:1248px;top:590px;width:2px;height:2px;background:#c0c0c0"></div>
<div style="position:absolute;left:1253px;top:590px;width:2px;height:2px;background:#c0c0c0"></div>
<div style="position:absolute;left:1257px;top:590px;width:2px;height:2px;background:#c0c0c0"></div>
<div style="position:absolute;left:632px;top:594px;width:1222px;height:145px;background:#f0f0f0;border:1px solid #c4c4c4;border-left:2px solid #c4c4c4;border-top:2px solid #c4c4c4;border-bottom:2px solid #c4c4c4;border-right:none"></div>
<div class="t" style="left:640px;top:606.34px;font-size:18.5px;color:#111;letter-spacing:0.5px;font-weight:normal;">Delay Models:</div>
<div class="t" style="left:640px;top:632.09px;font-size:18.5px;color:#111;letter-spacing:0.5px;font-weight:normal;">Slow fix5 100C Model</div>
<div class="t" style="left:640px;top:657.84px;font-size:18.5px;color:#111;letter-spacing:0.5px;font-weight:normal;">Slow fix5 0C Model</div>
<div class="t" style="left:640px;top:683.59px;font-size:18.5px;color:#111;letter-spacing:0.5px;font-weight:normal;">Fast fix5 0C Model</div>
<div class="t" style="left:640px;top:709.34px;font-size:18.5px;color:#111;letter-spacing:0.5px;font-weight:normal;">Fast fix5 100C Model</div>
<div style="position:absolute;left:920px;top:742px;width:2px;height:2px;background:#c0c0c0"></div>
<div style="position:absolute;left:925px;top:742px;width:2px;height:2px;background:#c0c0c0"></div>
<div style="position:absolute;left:930px;top:742px;width:2px;height:2px;background:#c0c0c0"></div>
<div style="position:absolute;left:934px;top:742px;width:2px;height:2px;background:#c0c0c0"></div>
<div style="position:absolute;left:939px;top:742px;width:2px;height:2px;background:#c0c0c0"></div>
<div style="position:absolute;left:944px;top:742px;width:2px;height:2px;background:#c0c0c0"></div>
<div style="position:absolute;left:6px;top:748px;width:1848px;height:2px;background:#c4c4c4"></div>
<div style="position:absolute;left:6px;top:750px;width:36px;height:162px;background:#eeeeee;border-bottom:1px solid #d0d0d0"></div>
<div style="position:absolute;left:41px;top:750px;width:2px;height:160px;background:#d6d6d6"></div>
<svg style="left:16px;top:758px" width="18" height="18" viewBox="0 0 18 18"><rect x="1" y="1" width="16" height="16" rx="4" fill="none" stroke="#666" stroke-width="1.8"/><path d="M5 5 L13 13 M13 5 L5 13" stroke="#555" stroke-width="2.6"/></svg>
<svg style="left:16px;top:787px" width="18" height="18" viewBox="0 0 18 18"><rect x="1" y="1" width="16" height="16" rx="4" fill="none" stroke="#777" stroke-width="1.8"/><rect x="5" y="7" width="6.5" height="6.5" rx="2" fill="none" stroke="#777" stroke-width="1.6"/><path d="M8 6.5 L8 4.5 L13.5 4.5 L13.5 10.5 L12 10.5" fill="none" stroke="#777" stroke-width="1.6"/></svg>
<div style="position:absolute;left:12px;top:810px;width:25px;height:25px;background:#e4e4e4;border:1.5px solid #c9c9c9;border-radius:5px"></div>
<svg style="left:12px;top:810px" width="25" height="25" viewBox="0 0 25 25"><path d="M11.6 13 L11.6 6.8 Q13.4 3.6 15.2 6.8 L15.2 13" stroke="#3a3a3a" stroke-width="1.5" fill="none"/><path d="M8 13.6 H18.8" stroke="#3a3a3a" stroke-width="2"/><path d="M13.4 13.6 V20.6" stroke="#3a3a3a" stroke-width="1.7"/></svg>
<div class="t" style="left:18.5px;top:840.76px;font-size:18px;color:#111;letter-spacing:0px;font-weight:bold;-webkit-text-stroke:0;">?</div>
<div class="t" style="left:15px;top:908.34px;font-size:18.5px;color:#111;letter-spacing:0.5px;font-weight:normal;transform:rotate(-90deg);transform-origin:0 0;">Co...</div>
<div style="position:absolute;left:45px;top:750px;width:1809px;height:3px;background:#e8e8e8"></div>
<div style="position:absolute;left:45px;top:752px;width:1809px;height:116px;background:#fff;border:1px solid #c4c4c4;border-top:2px solid #c4c4c4;border-right:none"></div>
<div style="position:absolute;left:46px;top:811px;width:1784px;height:28px;background:#efefef"></div>
<div class="t" style="left:83px;top:758.61px;font-size:17px;color:#1f5a92;letter-spacing:-0.2px;font-weight:normal;">tcl</div>
<svg style="left:101px;top:760px" width="9" height="15" viewBox="0 0 9 15"><path d="M1 1 L7.5 7.5 L1 14" stroke="#0a7ad8" stroke-width="1.9" fill="none"/></svg>
<div class="t" style="left:118px;top:757.53px;font-size:21.5px;color:#111;letter-spacing:0px;font-weight:normal;font-family:'Liberation Mono',monospace;">report_clock_fmax_summary -panel_name "Fmax Summary"</div>
<div class="t" style="left:83px;top:787.61px;font-size:17px;color:#1f5a92;letter-spacing:-0.2px;font-weight:normal;">tcl</div>
<svg style="left:101px;top:789px" width="9" height="15" viewBox="0 0 9 15"><path d="M1 1 L7.5 7.5 L1 14" stroke="#0a7ad8" stroke-width="1.9" fill="none"/></svg>
<div class="t" style="left:118px;top:786.53px;font-size:21.5px;color:#111;letter-spacing:0px;font-weight:normal;font-family:'Liberation Mono',monospace;">report_clock_fmax_summary -panel_name "Fmax Summary"</div>
<div style="position:absolute;left:83px;top:816px;width:26px;height:19px;background:#b8d6f2"></div>
<div class="t" style="left:83px;top:816.11px;font-size:17px;color:#1f5a92;letter-spacing:-0.2px;font-weight:normal;">tcl</div>
<svg style="left:101px;top:817.5px" width="9" height="15" viewBox="0 0 9 15"><path d="M1 1 L7.5 7.5 L1 14" stroke="#0a7ad8" stroke-width="1.9" fill="none"/></svg>
<div style="position:absolute;left:1830px;top:753px;width:24px;height:90px;background:#f6f6f6;border-left:2px solid #cbcbcb;border-right:2px solid #cbcbcb"></div>
<div style="position:absolute;left:1832px;top:775px;width:20px;height:3px;background:#d0d0d0"></div>
<div style="position:absolute;left:1832px;top:778px;width:20px;height:43px;background:linear-gradient(90deg,#f6f6f6,#ffffff 40%,#f0f0f0);border-bottom:2px solid #cfcfcf"></div>
<svg style="left:1835px;top:761px" width="12.5" height="5.5" viewBox="0 0 12.5 5.5"><path d="M0 5.5 L6.25 0 L12.5 5.5Z" fill="#404040"/></svg>
<svg style="left:1835px;top:829px" width="12.5" height="6" viewBox="0 0 12.5 6"><path d="M0 0 L6.25 6 L12.5 0Z" fill="#404040"/></svg>
<div style="position:absolute;left:46px;top:843px;width:1808px;height:24px;background:#f4f4f4;border-top:2px solid #cdcdcd;border-bottom:2px solid #c6c6c6"></div>
<div style="position:absolute;left:69px;top:845px;width:1530px;height:20px;background:linear-gradient(#ffffff,#f2f2f2)"></div>
<div style="position:absolute;left:67px;top:845px;width:2px;height:20px;background:#cdcdcd"></div>
<div style="position:absolute;left:1599px;top:845px;width:209px;height:20px;background:#e2e2e2;border-left:1px solid #d4d4d4"></div>
<svg style="left:53px;top:848px" width="6.5" height="12.5" viewBox="0 0 6.5 12.5"><path d="M6.5 0 L0 6.25 L6.5 12.5Z" fill="#404040"/></svg>
<svg style="left:1815px;top:848.5px" width="7" height="12" viewBox="0 0 7 12"><path d="M0 0 L7 6 L0 12Z" fill="#404040"/></svg>
<div style="position:absolute;left:1807px;top:845px;width:2px;height:20px;background:#d0d0d0"></div>
<div style="position:absolute;left:1829px;top:845px;width:2px;height:20px;background:#cbcbcb"></div>
<svg style="left:0px;top:860px" width="260" height="60" viewBox="0 0 260 60"><path d="M42 8.5 L53.5 44 Q55.5 51 62 51 L130 51 Q136.5 51 138.5 44 L150 8.5 Z" fill="#fff"/><path d="M42 7 L53.5 44 Q55.5 51 62 51 L130 51 Q136.5 51 138.5 44 L150 7" fill="none" stroke="#2a2a2a" stroke-width="2"/><path d="M151.5 8 L164.5 44 Q167 49.5 173 49.5 L227 49.5 Q233 49.5 235 44 L247.5 8" fill="none" stroke="#2a2a2a" stroke-width="2"/></svg>
<div class="t" style="left:61px;top:880.34px;font-size:18.5px;color:#111;letter-spacing:0.5px;font-weight:normal;">Console</div>
<div class="t" style="left:170px;top:879.34px;font-size:18.5px;color:#111;letter-spacing:0.5px;font-weight:normal;">History</div>
<div class="t" style="left:1767px;top:922.34px;font-size:18.5px;color:#111;letter-spacing:0.4px;font-weight:normal;">Ready</div>
<div style="position:absolute;left:1848px;top:930px;width:1.5px;height:1.5px;background:#c0c0c0"></div>
<div style="position:absolute;left:1844px;top:934px;width:1.5px;height:1.5px;background:#c0c0c0"></div>
<div style="position:absolute;left:1848px;top:934px;width:1.5px;height:1.5px;background:#c0c0c0"></div>
<div style="position:absolute;left:1840px;top:938px;width:1.5px;height:1.5px;background:#c0c0c0"></div>
<div style="position:absolute;left:1844px;top:938px;width:1.5px;height:1.5px;background:#c0c0c0"></div>
<div style="position:absolute;left:1848px;top:938px;width:1.5px;height:1.5px;background:#c0c0c0"></div>
<div style="position:absolute;left:136px;top:947px;width:1718px;height:2px;background:#a2a2a2"></div>
</body></html>
